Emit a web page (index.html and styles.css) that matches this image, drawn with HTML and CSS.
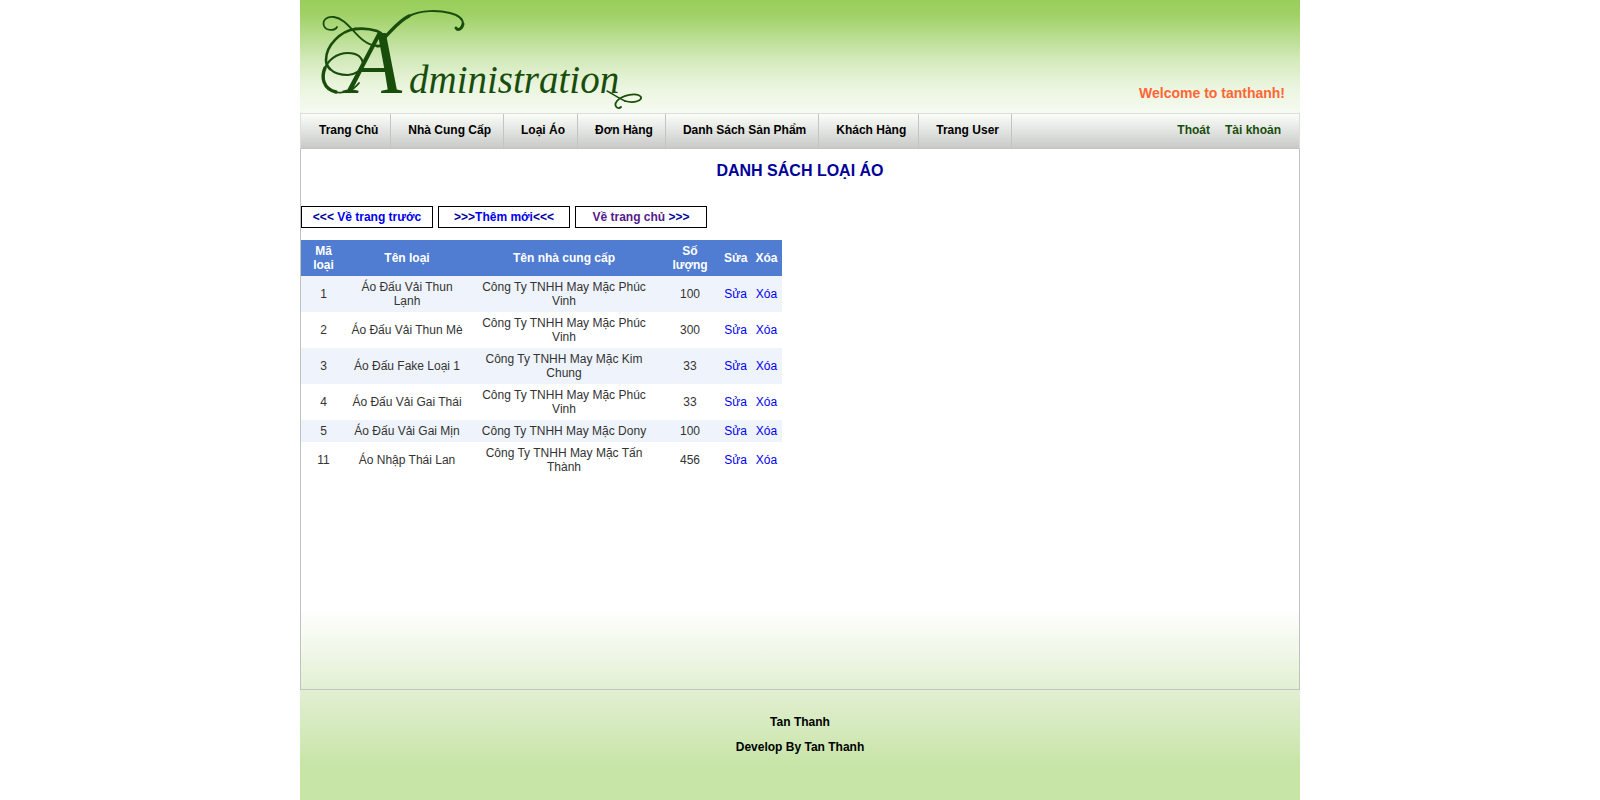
FILE: index.html
```html
<!DOCTYPE html>
<html lang="vi">
<head>
<meta charset="utf-8">
<title>Administration</title>
<link rel="stylesheet" href="styles.css">
</head>
<body>
<div class="page">
  <header class="header">
    <svg class="logo" viewBox="0 0 340 113" role="img" aria-label="Administration">
      <g class="swash">
        <path stroke-width="3.4" d="M68 37C76 29 82 21 92 16"/>
        <path stroke-width="2" d="M92 16C104 10 121 10 133 13C141 15 146 19 146 24"/>
        <path stroke-width="3" d="M146 24C145 29 141 31 139 28"/>
        <path stroke-width="1.8" d="M20 27C18 31 9 31 7 26C5 20 10 16 17 17C33 19 41 45 60 46"/>
        <path stroke-width="2.8" d="M60 46C71 47 70 35 60 31C54 29 46 28 38 29"/>
        <path stroke-width="2.6" d="M38 29C24 31 9 45 9 60C9 64 11 67 13 69"/>
        <path stroke-width="2" d="M13 69C18 74 25 75 31 75C39 74 46 70 46 64C45 56 39 53 31 53C20 53 10 60 7 71"/>
        <path stroke-width="3.4" d="M8 68C4 77 6 89 19 92"/>
        <path stroke-width="1.8" d="M18 92C26 94 36 91 42 83"/>
        <path stroke-width="1.4" d="M290 91C296 94 300 97 308 101"/>
        <path stroke-width="1.8" d="M308 101C318 104 325 100 324 97C320 92 305 95 300 101C296 106 301 110 304 107"/>
      </g>
      <text class="logo-cap" x="30" y="93">A</text>
      <text class="logo-word" x="92" y="93">dministration</text>
    </svg>
    <p class="welcome">Welcome to tanthanh!</p>
  </header>
  <nav class="nav">
    <ul class="menu">
      <li><a href="#">Trang Chủ</a></li>
      <li><a href="#">Nhà Cung Cấp</a></li>
      <li><a href="#">Loại Áo</a></li>
      <li><a href="#">Đơn Hàng</a></li>
      <li><a href="#">Danh Sách Sản Phẩm</a></li>
      <li><a href="#">Khách Hàng</a></li>
      <li><a href="#">Trang User</a></li>
    </ul>
    <div class="account">
      <a href="#">Thoát</a>
      <a href="#">Tài khoản</a>
    </div>
  </nav>
  <main class="content">
    <h1 class="title">DANH SÁCH LOẠI ÁO</h1>
    <div class="actions">
      <div class="action">&lt;&lt;&lt; <a href="#">Về trang trước</a></div>
      <div class="action">&gt;&gt;&gt;<a href="#">Thêm mới</a>&lt;&lt;&lt;</div>
      <div class="action"><a class="visited" href="#">Về trang chủ</a> &gt;&gt;&gt;</div>
    </div>
    <table class="grid">
      <colgroup>
        <col class="col-id"><col class="col-name"><col class="col-supplier"><col class="col-qty"><col class="col-link"><col class="col-link">
      </colgroup>
      <thead>
        <tr><th>Mã loại</th><th>Tên loại</th><th>Tên nhà cung cấp</th><th>Số lượng</th><th>Sửa</th><th>Xóa</th></tr>
      </thead>
      <tbody>
        <tr><td>1</td><td>Áo Đấu Vải Thun Lạnh</td><td>Công Ty TNHH May Mặc Phúc Vinh</td><td>100</td><td><a href="#">Sửa</a></td><td><a href="#">Xóa</a></td></tr>
        <tr><td>2</td><td>Áo Đấu Vải Thun Mè</td><td>Công Ty TNHH May Mặc Phúc Vinh</td><td>300</td><td><a href="#">Sửa</a></td><td><a href="#">Xóa</a></td></tr>
        <tr><td>3</td><td>Áo Đấu Fake Loại 1</td><td>Công Ty TNHH May Mặc Kim Chung</td><td>33</td><td><a href="#">Sửa</a></td><td><a href="#">Xóa</a></td></tr>
        <tr><td>4</td><td>Áo Đấu Vải Gai Thái</td><td>Công Ty TNHH May Mặc Phúc Vinh</td><td>33</td><td><a href="#">Sửa</a></td><td><a href="#">Xóa</a></td></tr>
        <tr><td>5</td><td>Áo Đấu Vải Gai Mịn</td><td>Công Ty TNHH May Mặc Dony</td><td>100</td><td><a href="#">Sửa</a></td><td><a href="#">Xóa</a></td></tr>
        <tr><td>11</td><td>Áo Nhập Thái Lan</td><td>Công Ty TNHH May Mặc Tấn Thành</td><td>456</td><td><a href="#">Sửa</a></td><td><a href="#">Xóa</a></td></tr>
      </tbody>
    </table>
  </main>
  <footer class="footer">
    <p>Tan Thanh</p>
    <p>Develop By Tan Thanh</p>
  </footer>
</div>
</body>
</html>
```
FILE: styles.css
```css
* { box-sizing: border-box; }

body {
  margin: 0;
  background: #fff;
  color: #000;
  font: 12px/14px "Liberation Sans", Arial, sans-serif;
}

a { color: inherit; text-decoration: none; }
p { margin: 0; }

.page {
  display: flex;
  flex-direction: column;
  max-width: 1000px;
  min-height: 100vh;
  margin: 0 auto;
  background: linear-gradient(to top, #c8e5a8 0, #c8e5a8 36px, #e2efd2 110px, #fff 190px);
}

/* Header */
.header {
  display: flex;
  justify-content: space-between;
  align-items: flex-end;
  height: 113px;
  padding: 0 15px 0 17px;
  background: linear-gradient(#99ce5a 0, #9fd165 14px, #d3eabb 60px, #e9f4dc 84px, #f6fbf2 113px);
}

.logo { width: 340px; height: 113px; }
.swash { fill: none; stroke: #194d0b; stroke-linecap: round; }
.logo text { fill: #194d0b; font-family: "Liberation Serif", serif; font-style: italic; }
.logo .logo-cap { font-size: 90px; }
.logo .logo-word { font-size: 39px; }

.welcome { padding-bottom: 12px; color: #f63; font-size: 14px; line-height: 16px; font-weight: bold; }

/* Navigation */
.nav {
  display: flex;
  justify-content: space-between;
  border: 1px solid #dcdedb;
  border-bottom-color: #c3c4c3;
  background: linear-gradient(#fbfdf9, #c9cac8);
  font-weight: bold;
}

.menu { display: flex; margin: 0; padding: 0 0 0 1px; list-style: none; }
.menu li { padding: 9px 12px 11px 17px; border-right: 1px solid #c3c5c2; }
.account { display: flex; gap: 15px; padding: 9px 18px 11px; color: #194d0b; }

/* Content */
.content { flex: 1; border: 1px solid #c0c4c0; border-top: 0; }
.title { margin: 13px 0 26px; color: #009; font-size: 16px; line-height: 18px; text-align: center; }

.actions { display: flex; gap: 5px; margin-bottom: 12px; }
.action {
  width: 132px;
  padding: 3px 0;
  border: 1px solid #000;
  background: #fff;
  color: #009;
  font-weight: bold;
  text-align: center;
}
.action a, .grid a { color: #00e; }
.action .visited { color: #551a8b; }

.grid { width: 481px; border-collapse: collapse; table-layout: fixed; color: #333; text-align: center; }
.grid th, .grid td { padding: 4px; }
.grid th { background: #507cd1; color: #fff; }
.grid tbody tr { background: #fff; }
.grid tbody tr:nth-child(odd) { background: #eff3fb; }
.col-id { width: 45px; }
.col-name { width: 122px; }
.col-supplier { width: 192px; }
.col-qty { width: 60px; }
.col-link { width: 31px; }

/* Footer */
.footer {
  display: flex;
  flex-direction: column;
  gap: 11px;
  height: 110px;
  padding-top: 25px;
  font-weight: bold;
  text-align: center;
}
```
